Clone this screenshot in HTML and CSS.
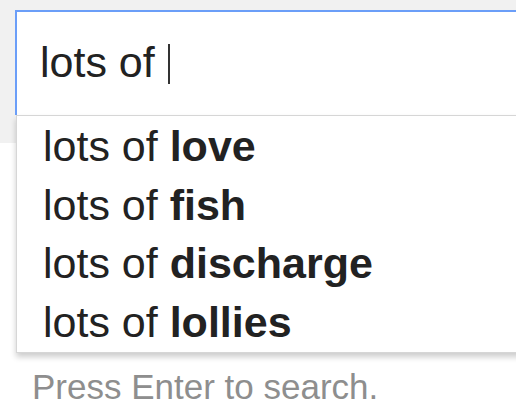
FILE: index.html
```html
<!DOCTYPE html>
<html lang="en">
<head>
<meta charset="utf-8">
<title>Search</title>
<link rel="stylesheet" href="styles.css">
</head>
<body>
<div class="page">
  <div class="header">
    <div class="input"><span class="query">lots of</span><span class="caret"></span></div>
    <ul class="suggest">
      <li>lots of <b>love</b></li>
      <li>lots of <b>fish</b></li>
      <li>lots of <b>discharge</b></li>
      <li>lots of <b>lollies</b></li>
    </ul>
  </div>
  <p class="hint">Press Enter to search.</p>
</div>
</body>
</html>
```

FILE: styles.css
```css
html, body {
  margin: 0;
  padding: 0;
  background: #ffffff;
}
.page {
  width: 516px;
  height: 414px;
  overflow: hidden;
  position: relative;
  font-family: "Liberation Sans", Arial, sans-serif;
  color: #222222;
}
.header {
  background: #f1f1f1;
  height: 143px;
  box-sizing: border-box;
  padding: 10px 0 0 15px;
}
.input {
  box-sizing: border-box;
  height: 105px;
  width: 520px;
  background: #ffffff;
  border-top: 2px solid #6b9ef8;
  border-left: 2px solid #6b9ef8;
  padding-left: 23px;
  display: flex;
  align-items: center;
  padding-bottom: 3px;
  font-size: 43px;
}
.query {
  line-height: 50px;
}
.caret {
  display: inline-block;
  width: 2px;
  height: 40px;
  background: #333333;
  margin-left: 13px;
  margin-top: 3px;
}
.suggest {
  position: absolute;
  left: 16px;
  top: 115px;
  width: 520px;
  margin: 0;
  padding: 1px 0 0 0;
  list-style: none;
  background: #ffffff;
  border: 1px solid #d6d6d6;
  box-shadow: 0 4px 6px rgba(0, 0, 0, 0.2);
  font-size: 43px;
}
.suggest li {
  line-height: 58.67px;
  padding-left: 26px;
  white-space: nowrap;
}
.suggest b {
  font-weight: bold;
}
.hint {
  margin: 224px 0 0 32px;
  font-size: 35px;
  line-height: 40px;
  color: #8e8e8e;
}
```
